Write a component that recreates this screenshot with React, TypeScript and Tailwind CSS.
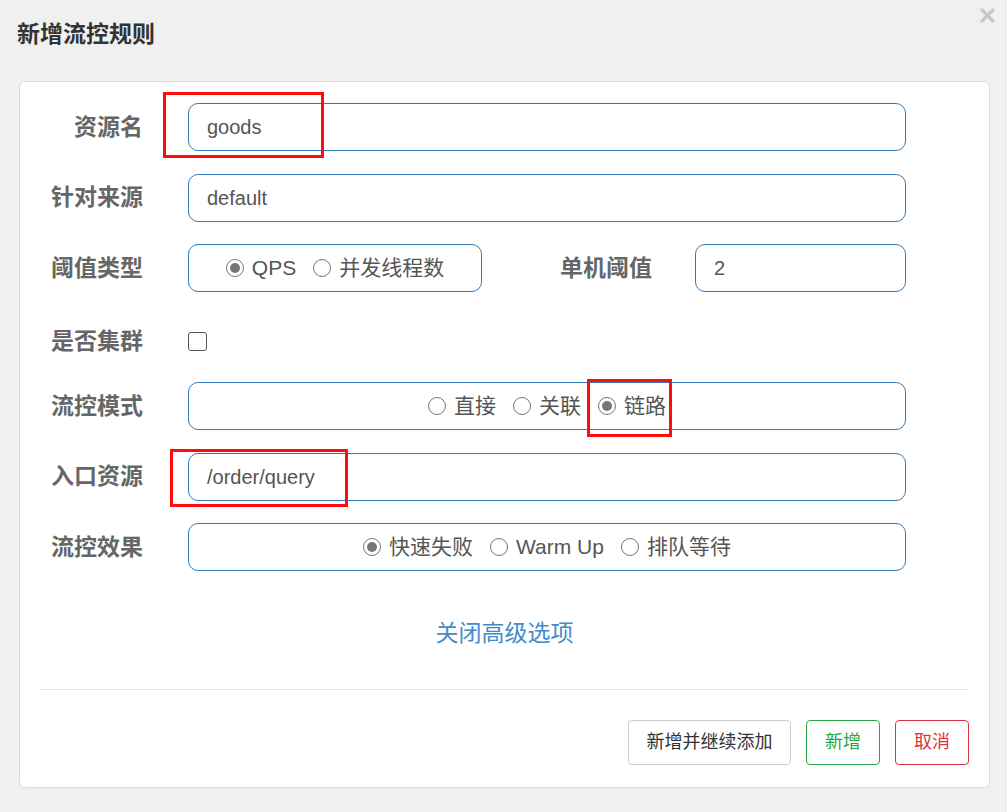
import React from 'react';

// Add flow-control rule dialog (Sentinel-style)

const font = { fontFamily: '"Liberation Sans", "Noto Sans CJK SC", sans-serif' };

function Radio({ checked, label }: { checked?: boolean; label: string }) {
  return (
    <span className="flex items-center">
      <span className="w-[18px] h-[18px] rounded-full border border-[#767676] bg-white flex items-center justify-center">
        {checked && <span className="w-[10px] h-[10px] rounded-full bg-[#767676]" />}
      </span>
      <span className="ml-[8px] text-[21px] text-[#555]">{label}</span>
    </span>
  );
}

function Label({ children, className = '' }: { children: React.ReactNode; className?: string }) {
  return (
    <div className={`text-right text-[23px] font-bold text-[#666] whitespace-nowrap ${className}`}>{children}</div>
  );
}

function TextBox({ value, className = '' }: { value: string; className?: string }) {
  return (
    <div
      className={`h-[48px] border border-[#337ab7] rounded-[10px] flex items-center px-[18px] text-[20px] text-[#555] bg-white ${className}`}
    >
      {value}
    </div>
  );
}

function RadioBox({ children, className = '' }: { children: React.ReactNode; className?: string }) {
  return (
    <div
      className={`h-[48px] border border-[#337ab7] rounded-[10px] flex items-center justify-center gap-[17px] bg-white ${className}`}
    >
      {children}
    </div>
  );
}

export default function App() {
  return (
    <div className="relative min-h-screen bg-[#f0f0f0] overflow-hidden" style={font}>
      {/* Header */}
      <div className="h-[81px] flex items-start justify-between">
        <h1 className="ml-[17px] mt-[15px] text-[23px] font-bold text-[#333]" style={{ fontFamily: '"Noto Sans CJK SC", sans-serif' }}>
          新增流控规则
        </h1>
        <svg className="mr-[12px] mt-[8px]" width="15" height="15" viewBox="0 0 15 15">
          <path d="M2 2 L13 13 M13 2 L2 13" stroke="#c8c8c8" strokeWidth="3.2" strokeLinecap="round" />
        </svg>
      </div>

      {/* Card */}
      <div className="ml-[19px] w-[971px] h-[707px] bg-white border border-[#dcdcdc] rounded-[6px] pt-[21px] px-[20px]">
        <div className="flex flex-col gap-[22.5px]">
          <div className="flex items-center">
            <Label className="w-[103px]">资源名</Label>
            <TextBox value="goods" className="ml-[45px] w-[718px]" />
          </div>
          <div className="flex items-center">
            <Label className="w-[103px]">针对来源</Label>
            <TextBox value="default" className="ml-[45px] w-[718px]" />
          </div>
          <div className="flex items-center">
            <Label className="w-[103px]">阈值类型</Label>
            <RadioBox className="ml-[45px] w-[294px]">
              <Radio checked label="QPS" />
              <Radio label="并发线程数" />
            </RadioBox>
            <Label className="w-[170px]">单机阈值</Label>
            <TextBox value="2" className="ml-[43px] w-[211px]" />
          </div>
          <div className="flex items-center h-[45px] pt-[9px]">
            <Label className="w-[103px]">是否集群</Label>
            <span className="ml-[45px] w-[19px] h-[19px] rounded-[3px] border-[1.5px] border-[#555] bg-white" />
          </div>
          <div className="flex items-center">
            <Label className="w-[103px]">流控模式</Label>
            <RadioBox className="ml-[45px] w-[718px]">
              <Radio label="直接" />
              <Radio label="关联" />
              <Radio checked label="链路" />
            </RadioBox>
          </div>
          <div className="flex items-center">
            <Label className="w-[103px]">入口资源</Label>
            <TextBox value="/order/query" className="ml-[45px] w-[718px]" />
          </div>
          <div className="flex items-center">
            <Label className="w-[103px]">流控效果</Label>
            <RadioBox className="ml-[45px] w-[718px]">
              <Radio checked label="快速失败" />
              <Radio label="Warm Up" />
              <Radio label="排队等待" />
            </RadioBox>
          </div>
        </div>

        <div className="mt-[45px] text-center text-[23px] text-[#428bca]">关闭高级选项</div>

        <div className="mt-[38px] border-t border-[#e5e5e5]" />

        <div className="mt-[30px] flex justify-end gap-[15px]">
          <button className="h-[45px] w-[163px] rounded-[4px] border border-[#ccc] bg-white text-[18px] text-[#333]">
            新增并继续添加
          </button>
          <button className="h-[45px] w-[74px] rounded-[4px] border border-[#28a745] bg-white text-[18px] text-[#28a745]">
            新增
          </button>
          <button className="h-[45px] w-[74px] rounded-[4px] border border-[#dc3545] bg-white text-[18px] text-[#dc3545]">
            取消
          </button>
        </div>
      </div>

      {/* Red annotation boxes */}
      <div className="absolute left-[163px] top-[92px] w-[161px] h-[66px] border-[3px] border-[#ff0d0d]" />
      <div className="absolute left-[587px] top-[379px] w-[85px] h-[58px] border-[3px] border-[#ff0d0d]" />
      <div className="absolute left-[170px] top-[449px] w-[178px] h-[58px] border-[3px] border-[#ff0d0d]" />
    </div>
  );
}
